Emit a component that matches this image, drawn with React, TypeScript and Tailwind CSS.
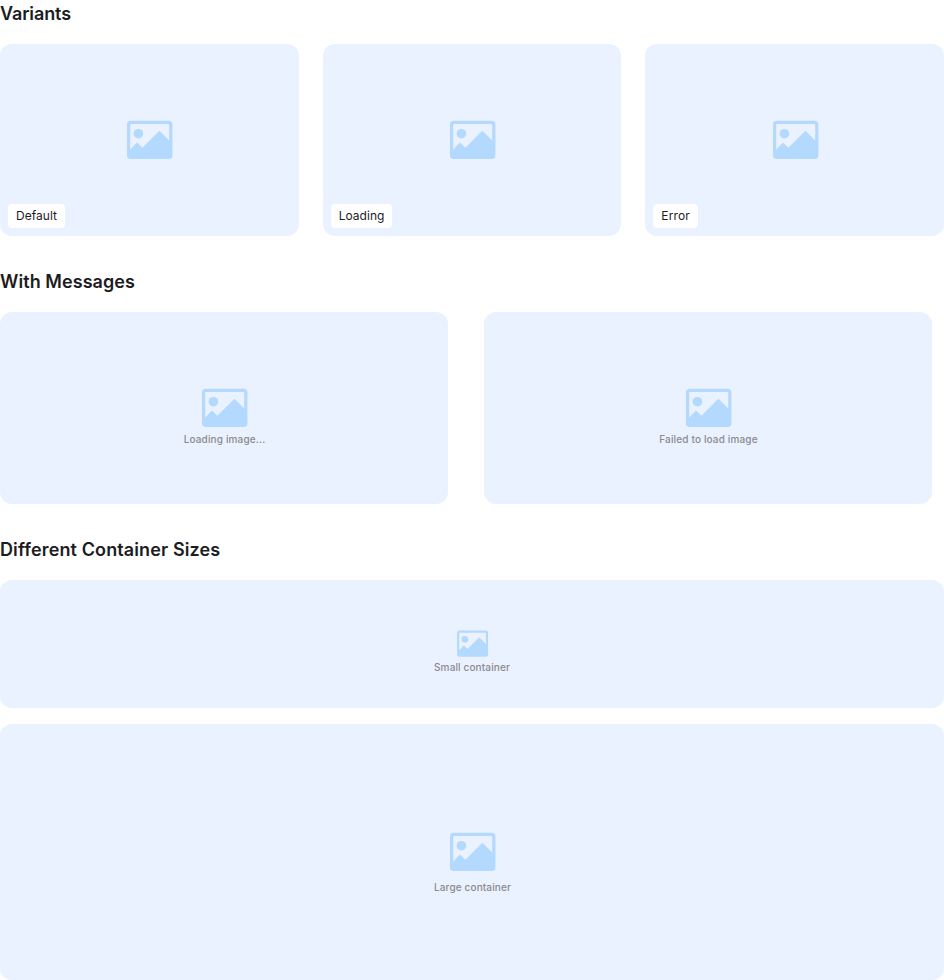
function Picture({ small = false }: { small?: boolean }) {
  return (
    <svg
      viewBox={small ? "0.54 0 46.6 39.4" : "0 0 48 40"}
      className={"shrink-0 text-[#b3d9ff] " + (small ? "h-[27px] w-8" : "h-10 w-12")}
    >
      <g transform="translate(2 .7)" fill="currentColor">
        <path
          fillRule="evenodd"
          d="M3.8 0H41.6Q45.4 0 45.4 3.8V34.5Q45.4 38.3 41.6 38.3H3.8Q0 38.3 0 34.5V3.8Q0 0 3.8 0ZM4.2 3.2Q3.2 3.2 3.2 4.2V28.7L10 21.7L15.4 27L32.4 10L42.2 19.9V4.2Q42.2 3.2 41.2 3.2Z"
        />
        <circle cx="11.4" cy="13" r="4.8" />
      </g>
    </svg>
  );
}

function Variant({ label, className }: { label: string; className: string }) {
  return (
    <div className="relative flex h-48 items-center justify-center rounded-xl bg-[#eaf1ff]">
      <Picture />
      <span className={"absolute bottom-2 left-2 rounded bg-white px-2 py-1 text-xs " + className}>{label}</span>
    </div>
  );
}

function Caption({ children, className }: { children: string; className: string }) {
  return (
    <p className={"text-[10px] leading-[15px] font-medium text-[#8a8a8f] " + className}>
      {children}
    </p>
  );
}

function Message({ text }: { text: string }) {
  return (
    <div className="flex h-48 w-[448px] flex-col items-center rounded-xl bg-[#eaf1ff] pt-[76px]">
      <Picture />
      <Caption className="mt-1 pl-px tracking-[0.15px]">{text}</Caption>
    </div>
  );
}

function Heading({ children, className }: { children: string; className: string }) {
  return <h3 className={"mb-4 text-lg leading-7 font-semibold " + className}>{children}</h3>;
}

export default function App() {
  return (
    <main className="bg-white font-['Inter',sans-serif] text-[#1c1c1f]">
      <section className="mb-8">
        <Heading className="tracking-[-0.12px]">Variants</Heading>
        <div className="grid grid-cols-3 gap-6">
          <Variant label="Default" className="tracking-[0.03px]" />
          <Variant label="Loading" className="tracking-[0.03px]" />
          <Variant label="Error" className="tracking-[0.15px]" />
        </div>
      </section>
      <section className="mb-8">
        <Heading className="tracking-[0.06px]">With Messages</Heading>
        <div className="flex gap-9">
          <Message text="Loading image..." />
          <Message text="Failed to load image" />
        </div>
      </section>
      <section>
        <Heading className="tracking-[0.12px]">Different Container Sizes</Heading>
        <div className="flex h-32 flex-col items-center rounded-xl bg-[#eaf1ff] pt-[50px]">
          <Picture small />
          <Caption className="mt-[3px] tracking-[0.13px]">Small container</Caption>
        </div>
        <div className="mt-4 flex h-64 flex-col items-center rounded-xl bg-[#eaf1ff] pt-[108px]">
          <Picture />
          <Caption className="mt-2 pl-px tracking-[0.13px]">Large container</Caption>
        </div>
      </section>
    </main>
  );
}
